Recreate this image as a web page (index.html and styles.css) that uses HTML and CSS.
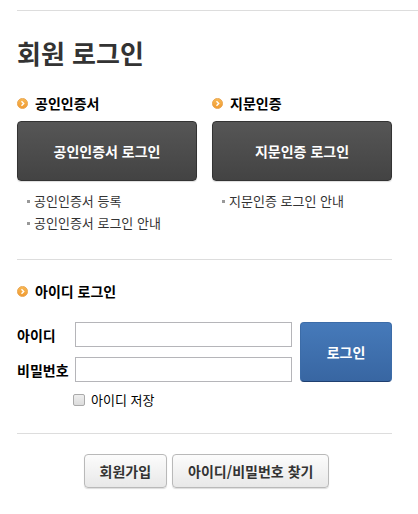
FILE: index.html
```
<!DOCTYPE html>
<html lang="ko">
<head>
  <meta charset="UTF-8" />
  <meta name="viewport" content="width=device-width, initial-scale=1" />
  <title>회원 로그인</title>
  <link rel="stylesheet" href="styles.css">
</head>
<body>

  <svg class="defs" width="0" height="0" aria-hidden="true">
    <defs>
      <linearGradient id="orange" x1="0" y1="0" x2="0" y2="1">
        <stop offset="0" stop-color="#f8b854" />
        <stop offset="1" stop-color="#f09a30" />
      </linearGradient>
      <symbol id="bullet" viewBox="0 0 11 11">
        <circle cx="5.5" cy="5.5" r="5.1" fill="url(#orange)" stroke="#e6a04a" stroke-width="0.8" />
        <path d="M4.5 3.3 L6.7 5.5 L4.5 7.7" fill="none" stroke="#fff" stroke-width="1.4" />
      </symbol>
    </defs>
  </svg>

  <header class="page-head">
    <h1>회원 로그인</h1>
  </header>

  <main class="content">
    <div class="cert">
      <section class="cert-box">
        <h2><svg class="bullet"><use href="#bullet" /></svg>공인인증서</h2>
        <button type="button" class="btn-dark">공인인증서 로그인</button>
        <ul>
          <li><a href="#">공인인증서 등록</a></li>
          <li><a href="#">공인인증서 로그인 안내</a></li>
        </ul>
      </section>
      <section class="cert-box">
        <h2><svg class="bullet"><use href="#bullet" /></svg>지문인증</h2>
        <button type="button" class="btn-dark">지문인증 로그인</button>
        <ul>
          <li><a href="#">지문인증 로그인 안내</a></li>
        </ul>
      </section>
    </div>

    <section class="id-login">
      <h2><svg class="bullet"><use href="#bullet" /></svg>아이디 로그인</h2>
      <form>
        <div class="login-row">
          <div class="fields">
            <label for="userId">아이디</label>
            <input type="text" id="userId" />
            <label for="userPw">비밀번호</label>
            <input type="password" id="userPw" />
          </div>
          <button type="submit" class="btn-login">로그인</button>
        </div>
        <div class="save">
          <input type="checkbox" id="saveId" />
          <label for="saveId">아이디 저장</label>
        </div>
      </form>
    </section>

    <div class="links">
      <button type="button" class="btn-light">회원가입</button>
      <button type="button" class="btn-light">아이디/비밀번호 찾기</button>
    </div>
  </main>

</body>
</html>
```

FILE: styles.css
```
* {
  box-sizing: border-box;
}
body {
  margin: 0;
  background: #fff;
  color: #000;
  font-family: "Noto Sans CJK KR", sans-serif;
  font-size: 13px;
  line-height: 20px;
}
h1, h2, ul {
  margin: 0;
  padding: 0;
}
button, input {
  margin: 0;
  font-family: inherit;
}
button {
  padding: 0;
  font-size: 14px;
  font-weight: bold;
  line-height: 20px;
  cursor: pointer;
}
.defs {
  display: block;
}

/* title */
.page-head {
  margin: 10px 0 20px 17px;
  padding-top: 22px;
  border-top: 1px solid #ddd;
}
h1 {
  color: #333;
  font-size: 26px;
  line-height: 40px;
}
.content {
  padding: 0 26px 24px 17px;
}
h2 {
  display: flex;
  align-items: center;
  gap: 7px;
  font-size: 14px;
  line-height: 20px;
}
.bullet {
  width: 11px;
  height: 11px;
}

/* certificate / fingerprint */
.cert {
  display: grid;
  grid-template-columns: 1fr 1fr;
  gap: 15px;
  padding-bottom: 25px;
}
.btn-dark {
  width: 100%;
  height: 60px;
  margin: 8px 0 9px;
  border: 1px solid #333;
  border-radius: 4px;
  background: linear-gradient(#565656, #434343);
  box-shadow: 0 1px 1px #ddd;
  color: #fff;
}
.cert ul {
  padding-left: 10px;
  list-style: none;
}
.cert li {
  display: flex;
  align-items: center;
  gap: 4px;
  line-height: 22px;
}
.cert li::before {
  content: "";
  width: 3px;
  height: 3px;
  background: #999;
}
.cert a {
  color: #333;
  text-decoration: none;
}

/* id login */
.id-login {
  padding: 21px 0 23px;
  border-top: 1px solid #ddd;
}
.login-row {
  display: flex;
  gap: 8px;
  margin-top: 21px;
}
.fields {
  flex: 1;
  display: grid;
  grid-template-columns: 58px 1fr;
  row-gap: 10px;
  align-items: center;
}
.fields label {
  font-size: 14px;
  font-weight: bold;
  white-space: nowrap;
}
.fields input {
  width: 100%;
  min-width: 0;
  height: 25px;
  padding: 0 4px;
  border: 1px solid #b5b5b9;
  font-size: 13px;
}
.btn-login {
  width: 92px;
  height: 60px;
  border: 1px solid #3c6ca8;
  border-bottom-color: #1f3f70;
  border-radius: 4px;
  background: linear-gradient(#467aba, #3866a2);
  color: #fff;
  font-size: 14px;
}
.save {
  display: flex;
  align-items: center;
  gap: 6px;
  margin: 8px 0 0 56px;
}
.save input {
  appearance: none;
  width: 12px;
  height: 12px;
  border: 1px solid #aaa;
  border-radius: 2px;
  background: linear-gradient(#eee, #dcdcdc);
}
.save input:checked {
  background: #467aba;
}

/* bottom buttons */
.links {
  display: flex;
  justify-content: center;
  gap: 5px;
  padding: 20px 0 0 4px;
  border-top: 1px solid #ddd;
}
.btn-light {
  height: 34px;
  padding: 0 15px;
  border: 1px solid #b9b9b9;
  border-radius: 4px;
  background: linear-gradient(#fcfcfc, #e8e8e8);
  box-shadow: 0 1px 1px #ddd;
  color: #333;
}
```
